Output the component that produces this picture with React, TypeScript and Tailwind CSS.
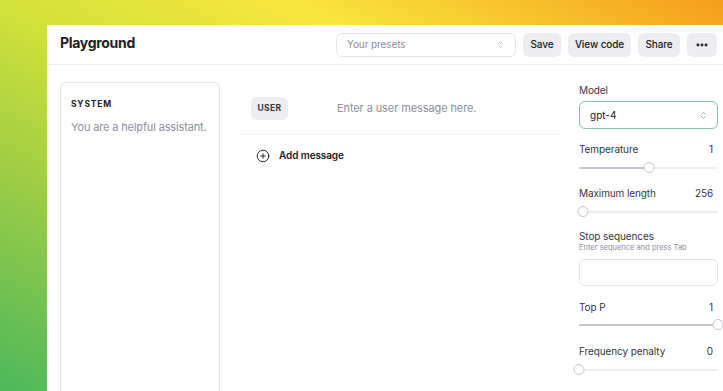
import { ChevronsUpDown, CirclePlus, Ellipsis } from "lucide-react";

function Slider({ pct, className }: { pct: number; className: string }) {
    return (
        <div className={`relative h-[12px] ${className}`}>
            <div className="absolute left-0 right-0 top-[5px] h-[2px] rounded-full bg-[#ececf1]" />
            <div
                className="absolute left-0 top-[5px] h-[2px] rounded-full bg-[#c5c5d2]"
                style={{ width: `${pct}%` }}
            />
            <div
                className="absolute top-0 h-[11px] w-[11px] -translate-x-1/2 rounded-full border border-[#c5c5d2] bg-white"
                style={{ left: `${pct}%` }}
            />
        </div>
    );
}

function Label({ name, value, className }: { name: string; value?: string; className: string }) {
    return (
        <div className={`flex h-[14px] items-center justify-between text-[10px] leading-[14px] tracking-[-0.1px] text-[#353740] ${className}`}>
            <span>{name}</span>
            {value && <span className="pr-[5px]">{value}</span>}
        </div>
    );
}

export default function App() {
    return (
        <div
            className="h-[391px] w-[723px] overflow-hidden bg-[linear-gradient(to_top_right,#4cb85c_0%,#9ccc45_28%,#d3e23a_50%,#f9e63c_70%,#f59e1b_100%)] pl-[47px] pt-[25px]"
            style={{ fontFamily: "Inter, 'Liberation Sans', sans-serif" }}
        >
            <div className="flex h-[366px] flex-col bg-white">
                {/* header */}
                <div className="flex h-[40px] shrink-0 items-center justify-between border-b border-[#ececf1] pl-[13px] pr-[6px]">
                    <h1 className="mb-[4px] text-[14px] font-bold tracking-[-0.3px] text-[#202123]">Playground</h1>
                    <div className="flex items-center gap-[7px] text-[10px] font-medium tracking-[-0.1px] text-[#202123]">
                        <div className="flex h-[24px] w-[180px] items-center justify-between rounded-md border border-[#e5e5e5] pl-[10px] pr-[10px] font-normal text-[#8e8ea0]">
                            <span>Your presets</span>
                            <ChevronsUpDown size={9} className="text-[#b4b4c0]" />
                        </div>
                        <button className="h-[24px] w-[38px] rounded-md bg-[#ececf1]">Save</button>
                        <button className="h-[24px] w-[63px] rounded-md bg-[#ececf1]">View code</button>
                        <button className="h-[24px] w-[42px] rounded-md bg-[#ececf1]">Share</button>
                        <button className="flex h-[24px] w-[30px] items-center justify-center rounded-md bg-[#ececf1]">
                            <Ellipsis size={14} strokeWidth={3} />
                        </button>
                    </div>
                </div>

                {/* body */}
                <div className="flex flex-1 pl-[13px] pr-[5px]">
                    <div className="mt-[17px] w-[160px] shrink-0 rounded-t-md border border-b-0 border-[#e5e5e5] px-[10px] pt-[15px]">
                        <div className="text-[8.5px] font-bold tracking-[0.8px] text-[#202123]">SYSTEM</div>
                        <div className="mt-[8px] text-[11px] leading-[16px] tracking-[-0.15px] text-[#8e8ea0]">You are a helpful assistant.</div>
                    </div>

                    <div className="ml-[18px] w-[322px] shrink-0 pt-[32px]">
                        <div className="flex items-center border-b border-[#f3f3f5] pb-[14px] pl-[13px]">
                            <span className="flex h-[23px] w-[37px] items-center justify-center rounded-md bg-[#ececf1] text-[8.5px] font-bold tracking-[0.4px] text-[#353740]">
                                USER
                            </span>
                            <span className="ml-[49px] text-[11px] tracking-[-0.1px] text-[#8e8ea0]">Enter a user message here.</span>
                        </div>
                        <div className="mt-[13px] flex items-center pl-[18px] text-[10px] font-semibold tracking-[-0.1px] text-[#202123]">
                            <CirclePlus size={14} strokeWidth={1.6} />
                            <span className="ml-[9px]">Add message</span>
                        </div>
                    </div>

                    <div className="ml-[19px] w-[139px] shrink-0 pt-[18px]">
                        <Label name="Model" className="" />
                        <div className="mt-[4px] flex h-[28px] items-center justify-between rounded-md border border-[#7fc3ad] pl-[10px] pr-[9px] text-[10px] text-[#202123]">
                            <span>gpt-4</span>
                            <ChevronsUpDown size={9} className="text-[#8e8ea0]" />
                        </div>
                        <Label name="Temperature" value="1" className="mt-[13px]" />
                        <Slider pct={50} className="mt-[6px]" />
                        <Label name="Maximum length" value="256" className="mt-[12px]" />
                        <Slider pct={3} className="mt-[6px]" />
                        <Label name="Stop sequences" className="mt-[11px]" />
                        <div className="h-[10px] text-[7.5px] leading-[10px] text-[#8e8ea0]">Enter sequence and press Tab</div>
                        <div className="mt-[6px] h-[27px] rounded-md border border-[#e5e5e5]" />
                        <Label name="Top P" value="1" className="mt-[14px]" />
                        <Slider pct={100} className="mt-[5px]" />
                        <Label name="Frequency penalty" value="0" className="mt-[13px]" />
                        <Slider pct={0} className="mt-[6px]" />
                    </div>
                </div>
            </div>
        </div>
    );
}
